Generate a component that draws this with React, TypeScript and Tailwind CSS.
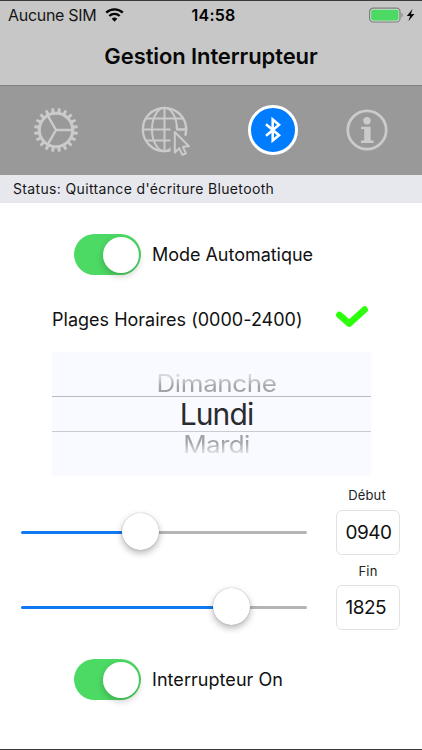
import React from "react";

function StatusBar() {
  return (
    <div className="flex h-[27px] items-center px-2">
      <div className="flex flex-1 items-center">
        <span className="text-[16px] leading-5 tracking-[-0.3px] whitespace-nowrap text-[#161616]">Aucune SIM</span>
        <svg className="ml-[9px] h-[14px] w-[19px]" viewBox="0 0 19 14">
          <path d="M1.2 4.7a12 12 0 0 1 16.6 0" fill="none" stroke="#050505" strokeWidth="2.4" />
          <path d="M4.3 8a7.5 7.5 0 0 1 10.4 0" fill="none" stroke="#050505" strokeWidth="2.3" />
          <path d="M9.5 13.7 6.7 10.8a4.1 4.1 0 0 1 5.6 0z" fill="#050505" />
        </svg>
      </div>
      <span className="ml-[5px] text-[16px] leading-5 font-semibold tracking-[0.2px] text-black">14:58</span>
      <div className="flex flex-1 items-center justify-end">
        <svg className="-mr-px h-[16px] w-[46px]" viewBox="0 0 46 16">
          <rect x="0.6" y="1.2" width="30.4" height="13.8" rx="3.6" fill="#cbdccc" stroke="#7d7d7d" strokeWidth="1.2" />
          <rect x="2.2" y="2.8" width="27.2" height="10.6" rx="1.8" fill="#4cd964" />
          <path d="M32.5 5.8c1.6.6 1.6 4 0 4.6z" fill="#7d7d7d" />
          <path d="M43.5 2 37.8 8.9h3.3l-1.7 5.3 6-7.2h-3.4z" fill="#0a0a0a" />
        </svg>
      </div>
    </div>
  );
}

function GearIcon() {
  const teeth = Array.from({ length: 20 }, (_, i) => i * 18);
  return (
    <svg className="h-[46px] w-[46px]" viewBox="-23 -23 46 46" fill="none" stroke="#cbcbcb">
      <circle r="16.7" strokeWidth="3" />
      {teeth.map((a) => (
        <path key={a} d="M-1.7-17.5 -1.2-22H1.2L1.7-17.5z" fill="#cbcbcb" stroke="none" transform={`rotate(${a + 9})`} />
      ))}
      <path d="M0 0H16M0 0-8-13.8M0 0-8 13.8" strokeWidth="2.4" />
    </svg>
  );
}

function GlobeIcon() {
  return (
    <svg className="h-[50px] w-[50px]" viewBox="0 0 50 50" fill="none" stroke="#cbcbcb" strokeWidth="2">
      <circle cx="23.5" cy="23.5" r="21.7" strokeWidth="2.3" />
      <ellipse cx="23.5" cy="23.5" rx="12.5" ry="21.7" />
      <path d="M23.5 1.5v44M1.5 23.5h44M5 12.5h37M5 34.5h37" />
      <path d="M29.5 21H33L38 25.5 50 34 47 54 34 47H29.5z" fill="#999" stroke="none" />
      <path d="M35.5 19.5c.3 1.3.5 2.6.5 4h9.2c0 2-.3 3.8-.9 5.5" />
      <path d="M33.8 26v20.5l4.5-4.2 3 6.6 3.6-1.6-3-6.5 6-.5z" strokeWidth="2" strokeLinejoin="round" />
    </svg>
  );
}

function BluetoothBadge() {
  return (
    <div className="flex h-[50px] w-[50px] items-center justify-center rounded-full border-[3px] border-white bg-[#007cff]">
      <svg className="h-[26px] w-[18px]" viewBox="0 0 18 26">
        <path d="m2 7.2 13 11-6.3 5.3V2.5L15 7.8 2 18.8" fill="none" stroke="#fff" strokeWidth="2.6" />
      </svg>
    </div>
  );
}

function InfoIcon() {
  return (
    <svg className="h-[42px] w-[42px]" viewBox="0 0 42 42">
      <circle cx="21" cy="21" r="19.2" fill="none" stroke="#cbcbcb" strokeWidth="2.8" />
      <circle cx="21" cy="11.8" r="3.7" fill="#cbcbcb" />
      <path d="M15 17.7h9.6v13.9h2.9v2.3H15v-2.3h3.2V20H15z" fill="#cbcbcb" />
    </svg>
  );
}

function Toggle() {
  return (
    <div className="flex h-[41px] w-[67px] items-start justify-end rounded-full bg-[#4cd964] pt-[2.5px] pr-[2px]">
      <div className="h-[36px] w-[36px] rounded-full bg-white shadow-[0_3px_7px_rgba(0,0,0,0.22)]" />
    </div>
  );
}

function Slider({ value }: { value: number }) {
  return (
    <div className="flex h-[38px] w-[286px] items-center">
      <div className="mt-[3px] h-[3px] rounded-l-full bg-[#1078f0]" style={{ width: value - 18.5 }} />
      <div className="z-10 h-[37px] w-[37px] shrink-0 rounded-full bg-white shadow-[0_0_1px_rgba(0,0,0,0.35),0_3px_7px_rgba(0,0,0,0.3)]" />
      <div className="mt-[3px] h-[3px] flex-1 rounded-r-full bg-[#b5b5b5]" />
    </div>
  );
}

function TimeField({ value }: { value: string }) {
  return (
    <div className="flex h-[45px] w-[64px] items-center rounded-[6px] border border-[#e2e2e2] bg-white pl-[8.5px] text-[19px] leading-none tracking-[-0.5px] text-[#111]">
      {value}
    </div>
  );
}

function DayPicker() {
  return (
    <div className="ml-[52px] flex h-[124px] w-[319px] flex-col items-center bg-[#f9faff]">
      <div className="flex h-[44px] w-full items-end justify-center pl-[10px]">
        <span className="-mb-px origin-bottom scale-y-[0.92] bg-gradient-to-b from-[#d6d7da] from-25% to-[#a2a3a7] to-60% bg-clip-text text-[26px] leading-[29px] font-[380] tracking-[-0.4px] text-transparent">
          Dimanche
        </span>
      </div>
      <div className="flex h-[36px] w-full items-center justify-center border-y border-t-[#b9babf] border-b-[#cbccd2] pl-[10px] text-[30px] leading-none font-[370] tracking-[-0.9px] text-[#2a2b2e]">
        Lundi
      </div>
      <span className="-mt-px ml-[10px] origin-top scale-y-[0.92] bg-gradient-to-b from-[#a0a1a5] from-40% to-[#d8d9dd] to-80% bg-clip-text text-[26px] leading-[29px] font-[380] tracking-[-0.6px] text-transparent">
        Mardi
      </span>
    </div>
  );
}

export default function App() {
  return (
    <div className="flex h-[750px] w-[422px] flex-col overflow-hidden border-b border-[#3a3a3c] bg-white font-['Inter','Liberation_Sans',sans-serif]">
      <header className="h-[86px] shrink-0 border-t border-b border-t-[#3a3a3c] border-b-[#828282] bg-[#c7c7c7]">
        <StatusBar />
        <h1 className="text-center text-[22px] leading-[56px] font-semibold tracking-[-0.1px] text-[#080808]">Gestion Interrupteur</h1>
      </header>

      <nav className="flex h-[89px] shrink-0 items-center bg-[#999999] pb-[2px]">
        <div className="ml-[33px]"><GearIcon /></div>
        <div className="mt-[2px] ml-[62px]"><GlobeIcon /></div>
        <div className="ml-[57px]"><BluetoothBadge /></div>
        <div className="ml-[48px]"><InfoIcon /></div>
      </nav>

      <div className="h-[28px] shrink-0 bg-[#e7e8ee] pl-[13px] text-[14px] leading-[28px] tracking-[0.35px] text-[#161618]">
        Status: Quittance d'écriture Bluetooth
      </div>

      <main className="flex flex-col">
        <div className="mt-[31px] ml-[74px] flex h-[41px] items-center gap-[11px] text-[18px] text-[#111]">
          <Toggle />
          <span className="tracking-[-0.03px]">Mode Automatique</span>
        </div>

        <div className="mt-[31px] ml-[52px] flex h-[26px] items-center text-[18px] text-[#111]">
          <span className="w-[283px] tracking-[0.01px] whitespace-nowrap">Plages Horaires (0000-2400)</span>
          <svg className="h-[26px] w-[34px]" viewBox="0 0 34 26">
            <path d="m4.4 9 9.8 8.6L29.6 3.6" fill="none" stroke="#2bff0b" strokeWidth="6.6" strokeLinecap="round" strokeLinejoin="round" />
          </svg>
        </div>

        <div className="mt-[20px]"><DayPicker /></div>

        <div className="mt-[10px] flex pl-[21px]">
          <div className="pt-[26px]"><Slider value={119.5} /></div>
          <div className="ml-[29px] flex w-[64px] flex-col items-center">
            <span className="mr-[2px] h-[24px] text-[13px] leading-[18px] tracking-[0.15px] text-[#222]">Début</span>
            <TimeField value="0940" />
          </div>
        </div>
        <div className="mt-[6px] flex pl-[21px]">
          <div className="pt-[26px]"><Slider value={210.5} /></div>
          <div className="ml-[29px] flex w-[64px] flex-col items-center">
            <span className="h-[24px] text-[13px] leading-[20px] tracking-[0.15px] text-[#222]">Fin</span>
            <TimeField value="1825" />
          </div>
        </div>

        <div className="mt-[29px] ml-[74px] flex h-[41px] items-center gap-[11px] text-[18px] text-[#111]">
          <Toggle />
          <span className="tracking-[0.05px]">Interrupteur On</span>
        </div>
      </main>
    </div>
  );
}
